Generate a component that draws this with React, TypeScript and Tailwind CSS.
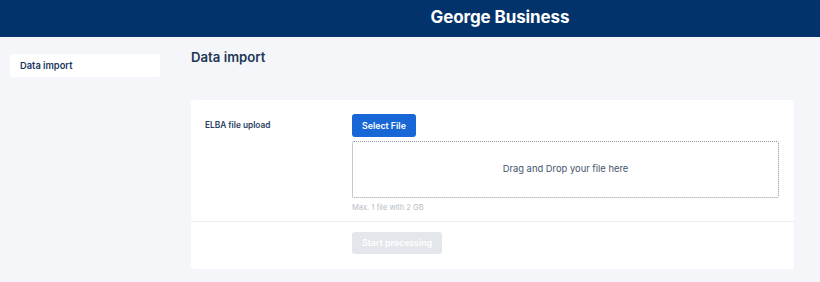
import React from "react";

const App = () => {
  return (
    <div className="min-h-screen w-full bg-[#f4f6f9] font-['Inter',sans-serif] text-[#1e3557]">
      <header className="flex h-[37px] items-center bg-[#02336a] text-white">
        <div className="w-[180px]" />
        <h1 className="flex-1 pb-[1px] text-center text-[17px] font-bold tracking-[-0.1px]">
          George Business
        </h1>
      </header>

      <div className="flex">
        <aside className="ml-[10px] mt-[17px] w-[150px]">
          <div className="flex h-[23px] items-center rounded-[3px] bg-white px-[10px] text-[9.3px] font-semibold text-[#1b365d]">
            Data import
          </div>
        </aside>

        <main className="ml-[31px] mr-[26px] flex-1 pt-[10px]">
          <h2 className="text-[13.2px] font-semibold leading-[20px] text-[#1f3656]">
            Data import
          </h2>

          <section className="mt-[33px] rounded-[3px] bg-white">
            <div className="flex px-[14px] pt-[14px] pb-[8px]">
              <div className="w-[147px] pt-[5px] text-[8.3px] font-semibold text-[#2a3f5f]">
                ELBA file upload
              </div>
              <div className="mr-[1px] flex-1">
                <button className="block h-[23px] rounded-[3px] bg-[#1767d6] px-[10px] text-[8.8px] font-semibold text-white">
                  Select File
                </button>
                <div className="mt-[4px] flex h-[57px] items-center justify-center rounded-[2px] border border-dotted border-[#8d96a3] text-[9.4px] text-[#44546d]">
                  Drag and Drop your file here
                </div>
                <p className="mt-[5px] text-[7.5px] leading-[10px] text-[#b6bcc5]">
                  Max. 1 file with 2 GB
                </p>
              </div>
            </div>
            <div className="h-px bg-[#e9ecf0]" />
            <div className="flex px-[14px] pt-[10px] pb-[15px]">
              <div className="w-[147px]" />
              <button className="block h-[22px] rounded-[3px] bg-[#e3e6eb] px-[10px] text-[8.8px] font-semibold text-white">
                Start processing
              </button>
            </div>
          </section>
        </main>
      </div>
    </div>
  );
};

export default App;
